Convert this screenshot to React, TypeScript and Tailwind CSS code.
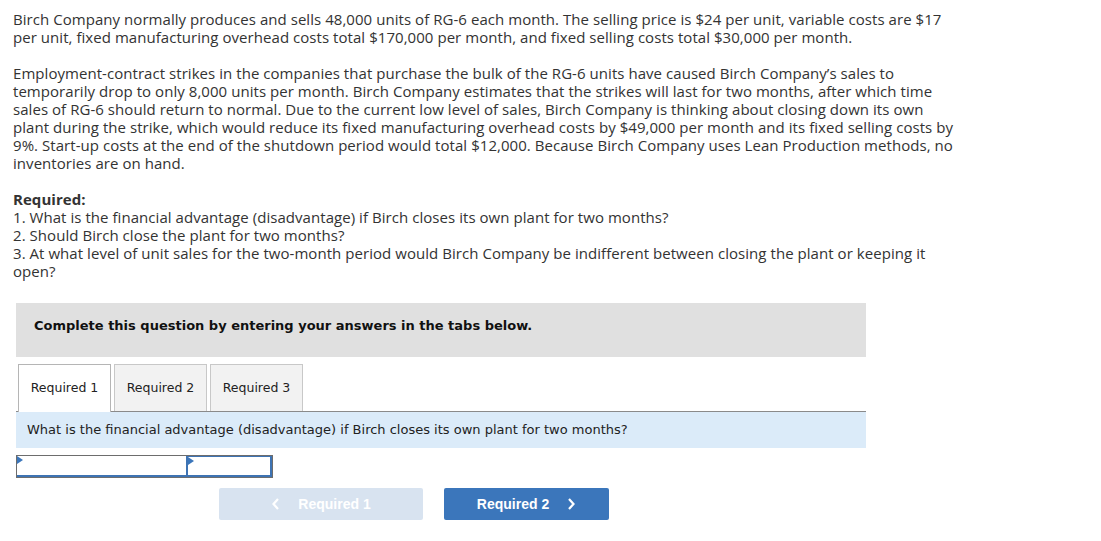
import React from "react";

const body = { fontFamily: "'Open Sans', Lato, sans-serif" };
const verdana = { fontFamily: "'DejaVu Sans', Verdana, sans-serif" };
const arial = { fontFamily: "'Liberation Sans', Arial, sans-serif" };

function Triangle() {
  return (
    <svg className="absolute left-0 top-0" width="6" height="8" viewBox="0 0 6 8">
      <path d="M0 0 L6 4 L0 8 Z" fill="#3b76bb" />
    </svg>
  );
}

export default function App() {
  return (
    <div className="w-[1101px] h-[541px] bg-white text-[#333] overflow-hidden">
      {/* Question text */}
      <div className="pl-[13px] pt-[10px] text-[15px] leading-[18px] tracking-[0.05px] whitespace-nowrap" style={body}>
        <p>
          Birch Company normally produces and sells 48,000 units of RG-6 each month. The selling price is $24 per unit, variable costs are $17
          <br />
          per unit, fixed manufacturing overhead costs total $170,000 per month, and fixed selling costs total $30,000 per month.
        </p>
        <p className="mt-[18px]">
          Employment-contract strikes in the companies that purchase the bulk of the RG-6 units have caused Birch Company’s sales to
          <br />
          temporarily drop to only 8,000 units per month. Birch Company estimates that the strikes will last for two months, after which time
          <br />
          sales of RG-6 should return to normal. Due to the current low level of sales, Birch Company is thinking about closing down its own
          <br />
          plant during the strike, which would reduce its fixed manufacturing overhead costs by $49,000 per month and its fixed selling costs by
          <br />
          9%. Start-up costs at the end of the shutdown period would total $12,000. Because Birch Company uses Lean Production methods, no
          <br />
          inventories are on hand.
        </p>
        <p className="mt-[18px]">
          <span className="font-bold">Required:</span>
          <br />
          1. What is the financial advantage (disadvantage) if Birch closes its own plant for two months?
          <br />
          2. Should Birch close the plant for two months?
          <br />
          3. At what level of unit sales for the two-month period would Birch Company be indifferent between closing the plant or keeping it
          <br />
          open?
        </p>
      </div>

      {/* Answer area */}
      <div className="ml-[16px] w-[850px] mt-[23px]" style={verdana}>
        <div className="h-[54px] bg-[#e0e0e0] flex items-center pl-[18px] pb-[8px] text-[13px] font-bold text-[#111]">
          Complete this question by entering your answers in the tabs below.
        </div>

        <div className="mt-[7px] flex gap-[3px] pl-[2px] text-[12.5px] text-[#222] relative z-10">
          <div className="w-[93px] h-[48px] bg-white border border-[#b5b5b5] border-b-0 flex items-center justify-center">
            Required 1
          </div>
          <div className="w-[93px] h-[47px] bg-[#f2f2f2] border border-[#c8c8c8] border-b-0 flex items-center justify-center">
            Required 2
          </div>
          <div className="w-[93px] h-[47px] bg-[#f2f2f2] border border-[#c8c8c8] border-b-0 flex items-center justify-center">
            Required 3
          </div>
        </div>
        <div className="-mt-px border-t border-[#8a8a8a] h-[37px] bg-[#dbebf9] flex items-center pl-[11px] text-[13px] text-[#222]">
          What is the financial advantage (disadvantage) if Birch closes its own plant for two months?
        </div>

        <div className="mt-[7px] flex w-[257px] h-[23px] border border-[#6d6d6d]">
          <div className="relative w-[171px] border-b-2 border-r-2 border-[#3e73b3] bg-white">
            <Triangle />
          </div>
          <div className="relative flex-1 border-2 border-l-0 border-t border-[#3e73b3] bg-white">
            <Triangle />
          </div>
        </div>

        <div className="mt-[10px] flex gap-[21px] pl-[203px] text-[14px] font-bold text-white" style={arial}>
          <div className="w-[204px] h-[32px] rounded-[2px] bg-[#d8e3f0] flex items-center justify-center gap-[18px]">
            <svg width="9" height="12" viewBox="0 0 9 12">
              <path d="M7 1 L2.5 6 L7 11" stroke="white" strokeWidth="2.2" fill="none" />
            </svg>
            <span>Required 1</span>
          </div>
          <div className="w-[165px] h-[32px] rounded-[2px] bg-[#3b76bb] flex items-center justify-center gap-[18px]">
            <span>Required 2</span>
            <svg width="9" height="12" viewBox="0 0 9 12">
              <path d="M2 1 L6.5 6 L2 11" stroke="white" strokeWidth="2.2" fill="none" />
            </svg>
          </div>
        </div>
      </div>
    </div>
  );
}
